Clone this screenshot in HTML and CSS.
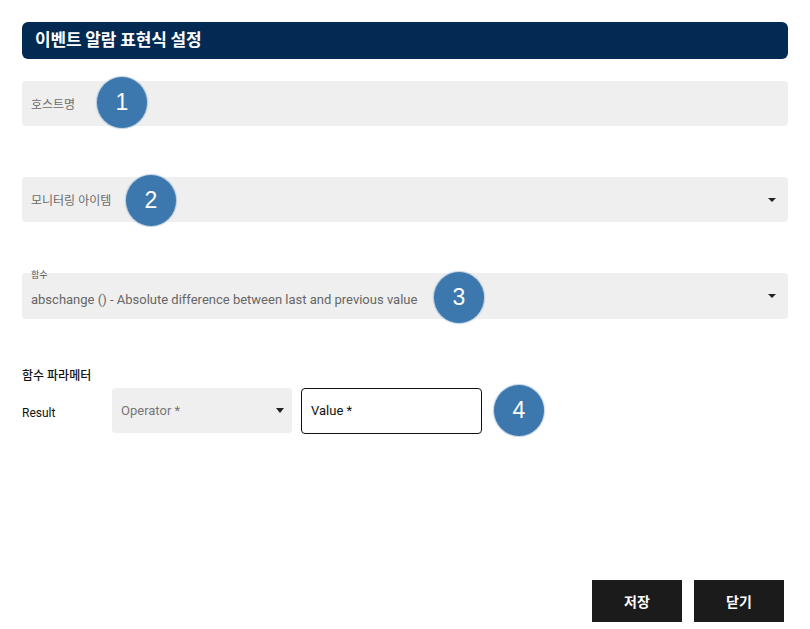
FILE: index.html
```html
<!DOCTYPE html>
<html lang="ko">
<head>
<meta charset="utf-8">
<link rel="stylesheet" href="styles.css">
</head>
<body>
<div class="dialog">
  <div class="header">이벤트 알람 표현식 설정</div>

  <div class="field f1">
    <span class="placeholder">호스트명</span>
    <span class="badge b1">1</span>
  </div>

  <div class="field f2">
    <span class="placeholder">모니터링 아이템</span>
    <span class="arrow"></span>
    <span class="badge b2">2</span>
  </div>

  <div class="field f3">
    <span class="float-label">함수</span>
    <span class="value-text">abschange () - Absolute difference between last and previous value</span>
    <span class="arrow"></span>
    <span class="badge b3">3</span>
  </div>

  <div class="params">
    <div class="params-title">함수 파라메터</div>
    <div class="params-row">
      <span class="row-label">Result</span>
      <div class="op-select">
        <span>Operator *</span>
        <span class="arrow small"></span>
      </div>
      <div class="val-input">Value *</div>
      <span class="badge inline">4</span>
    </div>
  </div>

  <div class="spacer"></div>

  <div class="actions">
    <button class="btn">저장</button>
    <button class="btn">닫기</button>
  </div>
</div>
</body>
</html>
```

FILE: styles.css
```css
* { box-sizing: border-box; }
html, body { margin: 0; padding: 0; background: #fff; }
body {
  font-family: Roboto, "Noto Sans CJK KR", sans-serif;
  width: 810px;
  height: 629px;
  overflow: hidden;
}
.dialog {
  display: flex;
  flex-direction: column;
  height: 629px;
  padding: 22px 22px 7px 22px;
}
.header {
  height: 37px;
  background: #022a52;
  border-radius: 6px;
  color: #fff;
  font-weight: 700;
  font-size: 17px;
  line-height: 37px;
  padding-left: 13px;
  letter-spacing: -0.2px;
}
.field {
  position: relative;
  height: 45px;
  background: #efefef;
  border-radius: 4px;
  display: flex;
  align-items: center;
  padding: 0 12px 0 9px;
  color: #6b6b6b;
}
.f1 { margin-top: 22px; }
.f2 { margin-top: 51px; }
.f3 { margin-top: 51px; height: 46px; }
.placeholder { font-size: 12px; }
.value-text { font-size: 13px; padding-top: 6px; color: #666; }
.float-label {
  position: absolute;
  left: 9px;
  top: -5px;
  font-size: 9px;
  color: #555;
}
.arrow {
  margin-left: auto;
  width: 0; height: 0;
  border-left: 4px solid transparent;
  border-right: 4px solid transparent;
  border-top: 4px solid #222;
  margin-right: 0;
}
.badge {
  width: 50px;
  height: 51px;
  border-radius: 50%;
  background: #3c77ae;
  color: #fff;
  font-family: "Liberation Sans", Arial, sans-serif;
  font-size: 23px;
  display: flex;
  align-items: center;
  justify-content: center;
  box-shadow: 0 0 1px 1px rgba(120,160,200,0.5);
}
.b1, .b2, .b3 { position: absolute; }
.b1 { left: 75px; top: -4px; }
.b2 { left: 104px; top: -2px; }
.b3 { left: 412px; top: -1px; }

.params { margin-top: 49px; }
.params-title {
  font-size: 12px;
  font-weight: 500;
  color: #111;
  line-height: 16px;
}
.params-row {
  margin-top: 1px;
  display: flex;
  align-items: center;
}
.row-label {
  width: 90px;
  font-size: 12px;
  color: #111;
  padding-top: 5px;
}
.op-select {
  width: 180px;
  height: 45px;
  background: #efefef;
  border-radius: 4px;
  display: flex;
  align-items: center;
  padding: 0 8px 0 9px;
  font-size: 13px;
  color: #777;
}
.op-select .arrow { border-left-width: 4.5px; border-right-width: 4.5px; border-top-width: 5px; margin-right: 0; }
.val-input {
  margin-left: 9px;
  width: 181px;
  height: 46px;
  border: 1px solid #111;
  border-radius: 4px;
  display: flex;
  align-items: center;
  padding-left: 9px;
  font-size: 13px;
  color: #111;
}
.badge.inline { margin-left: 12px; }
.spacer { flex: 1; }
.actions {
  display: flex;
  justify-content: flex-end;
  gap: 12px;
  padding-right: 4px;
}
.btn {
  width: 90px;
  height: 42px;
  background: #1b1b1b;
  color: #fff;
  border: none;
  border-radius: 0;
  font-family: Roboto, "Noto Sans CJK KR", sans-serif;
  font-size: 14px;
  font-weight: 700;
}
```
